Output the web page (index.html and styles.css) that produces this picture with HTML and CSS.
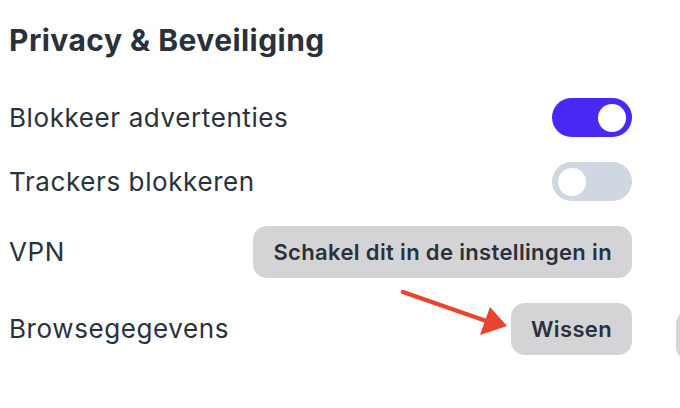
FILE: index.html
```html
<!DOCTYPE html>
<html lang="nl">
<head>
    <meta charset="UTF-8">
    <meta name="viewport" content="width=device-width, initial-scale=1.0">
    <title>Privacy &amp; Beveiliging</title>
    <link rel="stylesheet" href="styles.css">
</head>
<body>
    <div class="panel">
        <h2 class="title">Privacy &amp; Beveiliging</h2>

        <div class="settings">
            <div class="row">
                <span class="label">Blokkeer advertenties</span>
                <div class="toggle on"><span class="knob"></span></div>
            </div>
            <div class="row">
                <span class="label">Trackers blokkeren</span>
                <div class="toggle"><span class="knob"></span></div>
            </div>
            <div class="row">
                <span class="label">VPN</span>
                <button class="btn">Schakel dit in de instellingen in</button>
            </div>
            <div class="row">
                <span class="label">Browsegegevens</span>
                <button class="btn">Wissen</button>
                <button class="btn ghost"></button>
            </div>
        </div>

        <!-- pijl naar de knop -->
        <svg class="arrow" width="120" height="60" viewBox="0 0 120 60">
            <line x1="3" y1="3" x2="92" y2="34" stroke="#e8452c" stroke-width="4.5" stroke-linecap="round"/>
            <polygon points="107,37 90,18 80,46" fill="#e8452c"/>
        </svg>
    </div>
</body>
</html>
```

FILE: styles.css
```css
* { box-sizing: border-box; }

body {
    margin: 0;
    font-family: Inter, "Noto Sans", sans-serif;
    color: #29313a;
    background: #fff;
    overflow: hidden;
}

.panel {
    position: relative;
    width: 680px;
    height: 408px;
    overflow: hidden;
    padding: 0 48px 0 9px;
}

.title {
    margin: 0;
    padding-top: 22px;
    font-size: 30px;
    line-height: 36px;
    font-weight: 700;
    letter-spacing: 0.45px;
}

.settings {
    display: flex;
    flex-direction: column;
    gap: 25px;
    margin-top: 40px;
}

.row {
    display: flex;
    align-items: center;
}

.label {
    flex: 1;
    font-size: 26px;
    line-height: 30px;
    letter-spacing: 0.6px;
}

.toggle {
    width: 80px;
    height: 39px;
    border-radius: 20px;
    background: #cfd8e2;
    padding: 6px;
    display: flex;
}

.toggle.on {
    background: #4a27f5;
    justify-content: flex-end;
}

.knob {
    width: 28px;
    height: 28px;
    margin-top: -0.5px;
    border-radius: 50%;
    background: #fff;
}

.btn {
    height: 52px;
    padding: 0 20px;
    border: none;
    border-radius: 14px;
    background: #d4d4d7;
    color: #29313a;
    font-family: Inter, "Noto Sans", sans-serif;
    font-size: 22px;
    font-weight: 600;
    letter-spacing: 0.35px;
}

.btn.ghost {
    width: 60px;
    height: 51px;
    margin: 6px -104px -6px 44px;
}

.arrow {
    position: absolute;
    left: 400px;
    top: 289px;
}
```
